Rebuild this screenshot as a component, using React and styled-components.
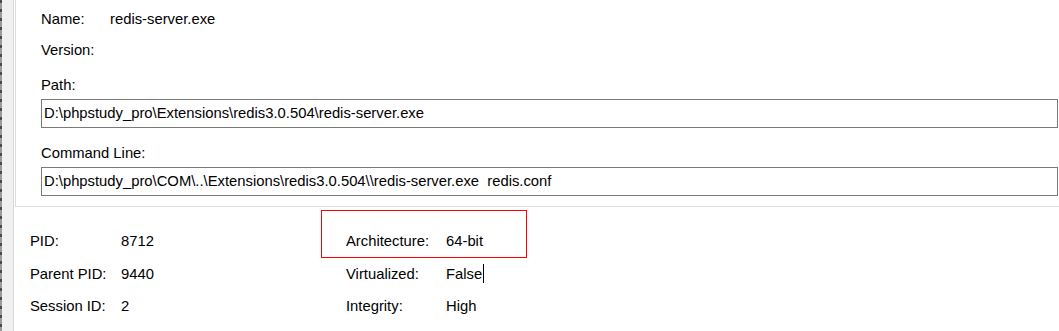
import React from "react"
import styled, { createGlobalStyle } from "styled-components"

const GlobalStyle = createGlobalStyle`
  html, body {
    margin: 0;
    padding: 0;
    background: #ffffff;
  }
  body {
    font-family: "Liberation Sans", Arial, sans-serif;
    font-size: 14.8px;
    color: #000000;
  }
`

const general = {
  name: "redis-server.exe",
  version: "",
  path: "D:\\phpstudy_pro\\Extensions\\redis3.0.504\\redis-server.exe",
  commandLine:
    "D:\\phpstudy_pro\\COM\\..\\Extensions\\redis3.0.504\\\\redis-server.exe  redis.conf"
}

const details = [
  [
    { label: "PID:", value: "8712" },
    { label: "Architecture:", value: "64-bit", marked: true }
  ],
  [
    { label: "Parent PID:", value: "9440" },
    { label: "Virtualized:", value: "False", caret: true }
  ],
  [
    { label: "Session ID:", value: "2" },
    { label: "Integrity:", value: "High" }
  ]
]

export default function App() {
  return (
    <>
      <GlobalStyle />
      <Window>
        <Gutter />
        <Main>
          <ImagePanel>
            <InfoRow>
              <InfoLabel>Name:</InfoLabel>
              <span>{general.name}</span>
            </InfoRow>
            <InfoRow>
              <InfoLabel>Version:</InfoLabel>
              <span>{general.version}</span>
            </InfoRow>
            <Field>
              <FieldLabel>Path:</FieldLabel>
              <TextBox>{general.path}</TextBox>
            </Field>
            <Field>
              <FieldLabel>Command Line:</FieldLabel>
              <TextBox>{general.commandLine}</TextBox>
            </Field>
          </ImagePanel>
          <Details>
            {details.map((row, i) => (
              <DetailRow key={i}>
                {row.map((item, j) => (
                  <Pair key={j} $marked={item.marked}>
                    <PairLabel $wide={j === 1}>{item.label}</PairLabel>
                    <PairValue>
                      {item.value}
                      {item.caret && <Caret />}
                    </PairValue>
                  </Pair>
                ))}
              </DetailRow>
            ))}
          </Details>
        </Main>
      </Window>
    </>
  )
}

//  ↓↓↓↓↓  STYLES  ↓↓↓↓↓↓↓
const Window = styled.div`
  display: flex;
  width: 1059px;
  height: 331px;
  overflow: hidden;
  background: #ffffff;
`
const Gutter = styled.div`
  width: 13px;
  flex-shrink: 0;
  background:
    repeating-linear-gradient(to bottom, #4a4a4a 0 3px, transparent 3px 9px) 0 0 / 2px 100% no-repeat,
    linear-gradient(to right, #9a9a9a 0 2px, #f0f0f0 2px);
  border-right: 1px solid #d6d6d6;
`
const Main = styled.div`
  flex: 1;
  display: flex;
  flex-direction: column;
`
const ImagePanel = styled.div`
  margin-left: 1px;
  border-left: 1px solid #dcdcdc;
  border-bottom: 1px solid #dcdcdc;
  padding: 4px 1px 10px 25px;
  display: flex;
  flex-direction: column;
`
const InfoRow = styled.div`
  display: flex;
  height: 31px;
  line-height: 31px;
`
const InfoLabel = styled.span`
  width: 69px;
`
const Field = styled.div`
  display: flex;
  flex-direction: column;
  gap: 4px;
  margin-top: 9px;
  & + & {
    margin-top: 15px;
  }
`
const FieldLabel = styled.div`
  height: 20px;
  line-height: 20px;
`
const TextBox = styled.div`
  height: 27px;
  line-height: 27px;
  border: 1px solid #7a7a7a;
  padding-left: 2px;
  white-space: pre;
  overflow: hidden;
`
const Details = styled.div`
  padding: 18px 0 0 16px;
  display: flex;
  flex-direction: column;
`
const DetailRow = styled.div`
  display: flex;
  height: 32.5px;
  line-height: 32.5px;
`
const Pair = styled.div`
  display: flex;
  position: relative;
  &:first-child {
    width: 316px;
  }
  ${props =>
    props.$marked &&
    `
    &::after {
      content: "";
      position: absolute;
      left: -25px;
      top: -15px;
      width: 206px;
      height: 48px;
      box-sizing: border-box;
      border: 1px solid #ff0000;
      pointer-events: none;
    }
  `}
`
const PairLabel = styled.span`
  width: ${props => (props.$wide ? "100px" : "91px")};
`
const PairValue = styled.span`
  display: flex;
  align-items: center;
`
const Caret = styled.span`
  display: inline-block;
  width: 1px;
  height: 19px;
  margin-left: 1px;
  background: #000000;
`
